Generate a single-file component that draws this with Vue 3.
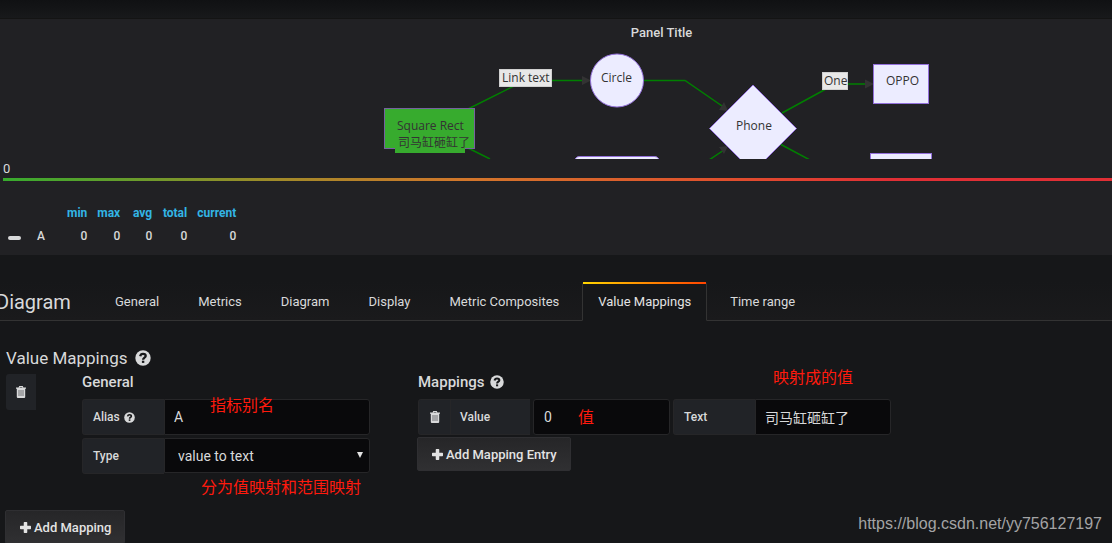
<script setup>
import { ref } from 'vue'

const tabs = ['General', 'Metrics', 'Diagram', 'Display', 'Metric Composites', 'Value Mappings', 'Time range']
const activeTab = ref('Value Mappings')
const stats = ['min', 'max', 'avg', 'total', 'current']
const series = [{ name: 'A', min: 0, max: 0, avg: 0, total: 0, current: 0 }]
const alias = ref('A')
const mappingType = ref('value to text')
const entryValue = ref('0')
const entryText = ref('司马缸砸缸了')
</script>

<template>
  <div class="page">
    <svg class="defs" aria-hidden="true">
      <symbol id="trash" viewBox="0 0 10 12">
        <path d="M3.200 0h3.600l.6 1.500H10v1.300H9.200V11q0 1-1 1H1.800q-1 0-1-1V2.800H0V1.500h2.600zM3.800 1l-.2.5h2.800L6.200 1z" fill="currentColor" fill-rule="evenodd" />
        <path d="M3 4v6M5 4v6M7 4v6" stroke="#55575a" stroke-width=".8" />
      </symbol>
      <symbol id="plus" viewBox="0 0 10 10">
        <path d="M4 0h2q.6 0 .6.6v2.800h2.800q.6 0 .6.6v2q0 .6-.6.6H6.600v2.800q0 .6-.6.6H4q-.6 0-.6-.6V6.600H.6Q0 6.600 0 6V4q0-.6.6-.6h2.800V.6Q3.400 0 4 0z" fill="currentColor" />
      </symbol>
      <symbol id="help" viewBox="0 0 16 16">
        <circle cx="8" cy="8" r="7.700" fill="currentColor" />
        <path d="M5.200 6.300C5.500 4.600 6.500 3.900 8 3.900c1.500 0 2.700.8 2.700 2.100C10.700 7.600 8.100 7.700 8.100 9.700" fill="none" stroke="#161719" stroke-width="2.300" />
        <rect x="6.900" y="10.700" width="2.400" height="2.200" fill="#161719" />
      </symbol>
    </svg>

    <div class="topbar"></div>

    <section class="panel">
      <div class="canvas">
        <h1 class="panel-title">Panel Title</h1>
        <svg class="diagram" viewBox="380 48 560 111" width="560" height="111">
          <g class="edges">
            <path d="M468 109L525 80.500H587" />
            <path d="M643 80.500H685L725 108" />
            <path d="M782 113L835 84H870" />
            <path d="M468 148L490 159" />
            <path d="M709 160L724 150" />
            <path d="M780 144L810 160" />
          </g>
          <g class="arrows">
            <path d="M582 76l9 4.500-9 4.500z" />
            <path d="M728 111l-9-1 5-8z" />
            <path d="M865 79.500l9 4.500-9 4.500z" />
            <path d="M728 146l-9 1 5 7z" />
          </g>
          <g class="nodes">
            <rect class="hot" x="384.500" y="108.500" width="90" height="40" />
            <circle cx="617" cy="80.500" r="26.500" />
            <path d="M753 85L796.500 128.500L753 172L709.500 128.500z" />
            <rect x="873.500" y="64.500" width="55" height="39" />
            <rect x="574.500" y="156.500" width="85" height="40" rx="5" />
            <rect x="870.500" y="153.500" width="61" height="40" />
          </g>
          <rect x="395" y="144" width="70" height="9" fill="#37ab2e" />
          <g class="tags">
            <rect x="499.500" y="69.500" width="52" height="17" />
            <rect x="822.500" y="72.500" width="25" height="17" />
          </g>
          <g class="captions">
            <text x="502" y="82">Link text</text>
            <text x="601" y="82">Circle</text>
            <text x="824" y="85">One</text>
            <text x="886" y="85">OPPO</text>
            <text x="736" y="130">Phone</text>
            <text x="397" y="130">Square Rect</text>
            <text x="398" y="147">司马缸砸缸了</text>
          </g>
        </svg>
      </div>

      <div class="scale">
        <span>0</span>
        <div class="scale-bar"></div>
      </div>

      <table class="legend">
        <thead>
          <tr>
            <th class="key"></th>
            <th class="name"></th>
            <th v-for="s in stats" :key="s" :class="s">{{ s }}</th>
          </tr>
        </thead>
        <tbody>
          <tr v-for="row in series" :key="row.name">
            <td class="key"><i class="dash"></i></td>
            <td class="name">{{ row.name }}</td>
            <td v-for="s in stats" :key="s">{{ row[s] }}</td>
          </tr>
        </tbody>
      </table>
    </section>

    <header class="tabs-bar">
      <h2 class="editor-title">Diagram</h2>
      <nav class="tabs">
        <button v-for="t in tabs" :key="t" type="button" class="tab" :class="{ active: t === activeTab }" @click="activeTab = t">{{ t }}</button>
      </nav>
    </header>

    <main class="editor">
      <h3 class="section-title">Value Mappings <svg class="help-lg"><use href="#help" /></svg></h3>
      <div class="mapping">
        <button type="button" class="remove" aria-label="Remove mapping"><svg class="trash"><use href="#trash" /></svg></button>

        <section class="general">
          <h4>General</h4>
          <div class="row">
            <label class="label" for="alias">Alias <svg class="help-sm"><use href="#help" /></svg></label>
            <input id="alias" v-model="alias" class="field" type="text" />
            <span class="note note-alias">指标别名</span>
          </div>
          <div class="row">
            <label class="label" for="type">Type</label>
            <div class="select-wrap">
              <select id="type" v-model="mappingType" class="field">
                <option>value to text</option>
                <option>range to text</option>
              </select>
            </div>
            <span class="note note-type">分为值映射和范围映射</span>
          </div>
        </section>

        <section class="entries">
          <h4>Mappings <svg class="help-md"><use href="#help" /></svg></h4>
          <div class="row">
            <button type="button" class="label entry-remove" aria-label="Remove entry"><svg class="trash"><use href="#trash" /></svg></button>
            <label class="label value-label" for="value">Value</label>
            <input id="value" v-model="entryValue" class="field short spaced" type="text" />
            <label class="label" for="text">Text</label>
            <input id="text" v-model="entryText" class="field short" type="text" />
            <span class="note note-value">值</span>
            <span class="note note-text">映射成的值</span>
          </div>
          <button type="button" class="btn"><svg class="plus"><use href="#plus" /></svg>Add Mapping Entry</button>
        </section>
      </div>
      <button type="button" class="btn add-mapping"><svg class="plus"><use href="#plus" /></svg>Add Mapping</button>
    </main>

    <span class="watermark">https://blog.csdn.net/yy756127197</span>
  </div>
</template>

<style>
body {
  background: #161719;
  overflow: hidden;
}
</style>

<style scoped>
.page {
  position: relative;
  height: 100vh;
  overflow: hidden;
  background: #161719;
  color: #d8d9da;
  font: 13px/18px Roboto, "Noto Sans CJK SC", sans-serif;
}
.page * {
  box-sizing: border-box;
}
h1, h2, h3, h4 {
  margin: 0;
  font-weight: 500;
}
button, input, select {
  margin: 0;
  font-family: inherit;
  color: inherit;
}
.defs {
  position: absolute;
  width: 0;
  height: 0;
}
.topbar {
  height: 19px;
  background: linear-gradient(#101113, #18191b);
  border-bottom: 1px solid #141414;
}
.panel {
  height: 236px;
  background: #212124;
}
.canvas {
  display: flex;
  flex-direction: column;
  align-items: center;
  padding: 5px 0 0 211px;
}
.panel-title {
  font-size: 13px;
  line-height: 18px;
  margin-bottom: 6px;
}
.diagram {
  display: block;
  flex: none;
  margin-right: 3px;
}
.edges path {
  fill: none;
  stroke: #008000;
  stroke-width: 1.500;
}
.arrows path {
  fill: #333;
}
.nodes > * {
  fill: #ececff;
  stroke: #9370db;
}
.nodes .hot {
  fill: #37ab2e;
  stroke: #76619f;
}
.tags rect {
  fill: #e8e8e8;
  stroke: #d0d0d0;
}
.captions {
  fill: #333;
  font: 12px "Open Sans", "Noto Sans CJK SC", sans-serif;
}
.scale {
  padding: 1px 0 0 3px;
}
.scale span {
  display: block;
}
.scale-bar {
  height: 3px;
  background: linear-gradient(90deg, #37ab2e, #a28a29 25%, #d3762b 42%, #e0502d 65%, #e02f35 80%);
}
.legend {
  margin-top: 20px;
  border-collapse: collapse;
  font-size: 12px;
  font-weight: 500;
}
.legend th, .legend td {
  height: 23px;
  padding: 0 0 0 10px;
  text-align: right;
}
.legend th {
  color: #33b5e5;
  font-weight: 700;
}
.legend .avg {
  width: 32px;
}
.legend .total {
  width: 35px;
}
.legend .current {
  width: 49px;
}
.legend .key {
  width: 21px;
  padding: 0 0 0 8px;
}
.legend .name {
  width: 36px;
  padding: 0 12px 0 0;
}
.dash {
  display: block;
  width: 13px;
  height: 4px;
  margin-top: 4px;
  border-radius: 2px;
  background: #d8d9da;
}
.tabs-bar {
  display: flex;
  height: 39px;
  margin-top: 27px;
  border-bottom: 1px solid #333;
  background: linear-gradient(#161719, #1a1a1c);
}
.editor-title {
  flex: none;
  width: 103px;
  margin-left: -4px;
  font-size: 20px;
  line-height: 40px;
  font-weight: 400;
}
.tabs {
  display: flex;
  gap: 7px;
}
.tab {
  position: relative;
  height: 39px;
  padding: 0 15px;
  border: 1px solid transparent;
  background: transparent;
  font-size: 13px;
  line-height: 37px;
}
.tab.active {
  border-color: #333 #333 transparent;
  border-radius: 3px 3px 0 0;
  background: #161719;
  color: #e3e3e3;
}
.tab.active::before {
  content: "";
  position: absolute;
  top: -1px;
  left: 0;
  right: 0;
  height: 2px;
  background: linear-gradient(90deg, #ffd500, #ff4400);
}
.editor {
  padding: 26px 5px 0;
}
.section-title {
  display: flex;
  align-items: center;
  gap: 8px;
  padding-left: 1px;
  font-size: 17px;
  line-height: 22px;
  font-weight: 400;
}
.help-lg {
  width: 16px;
  height: 16px;
}
.help-md {
  width: 14px;
  height: 14px;
}
.help-sm {
  width: 11px;
  height: 11px;
}
.mapping {
  display: flex;
  align-items: flex-start;
  padding-left: 1px;
}
.remove {
  flex: none;
  width: 30px;
  height: 36px;
  margin: 5px 46px 0 0;
  padding: 0;
  border: 0;
  border-radius: 3px 0 0 3px;
  background: #212327;
}
.trash {
  display: block;
  width: 10px;
  height: 12px;
  margin: 0 auto;
}
.general {
  width: 336px;
}
h4 {
  display: flex;
  align-items: center;
  gap: 6px;
  height: 30px;
  padding-bottom: 4px;
  font-size: 15px;
  line-height: 26px;
  font-weight: 500;
}
.row {
  position: relative;
  display: flex;
  height: 36px;
  margin-bottom: 3px;
}
.label {
  display: flex;
  align-items: center;
  gap: 4px;
  flex: none;
  width: 82px;
  padding: 0 10px;
  border: 1px solid #262628;
  border-right: 0;
  border-radius: 3px 0 0 3px;
  background: #212327;
  font-size: 12px;
  font-weight: 500;
}
.entry-remove {
  width: 32px;
}
.value-label {
  width: 80px;
  padding-left: 9px;
  border-radius: 0;
}
.field {
  width: 206px;
  height: 36px;
  padding: 0 9px;
  border: 1px solid #262628;
  border-radius: 0 3px 3px 0;
  background: #09090b;
  font-size: 14px;
  line-height: 20px;
  appearance: none;
}
.field.short {
  width: 136px;
}
.field.spaced {
  width: 137px;
  margin: 0 3px;
  padding: 0 10px;
  border-radius: 3px;
}
.select-wrap {
  position: relative;
}
.select-wrap .field {
  height: 35px;
  padding-left: 13px;
}
.select-wrap::after {
  content: "";
  position: absolute;
  top: 14px;
  right: 7px;
  border: 3px solid transparent;
  border-top: 6px solid #e3e3e3;
  border-bottom: 0;
  pointer-events: none;
}
.btn {
  display: flex;
  align-items: center;
  gap: 3px;
  height: 34px;
  padding: 0 13px 0 14px;
  border: 1px solid #2f2f32;
  border-radius: 2px;
  background: linear-gradient(#262628, #303032);
  font-size: 13px;
  font-weight: 500;
  color: #e3e3e3;
}
.entries .btn {
  margin: -1px 0 0 -1px;
}
.add-mapping {
  margin-top: 33px;
}
.plus {
  width: 11px;
  height: 11px;
}
.note {
  position: absolute;
  color: #ff1a0d;
  font: 16px/20px "Noto Sans CJK SC", sans-serif;
  white-space: nowrap;
  pointer-events: none;
}
.note-alias {
  top: -5px;
  left: 128px;
}
.note-type {
  top: 38px;
  left: 119px;
}
.note-value {
  top: 7px;
  left: 160px;
}
.note-text {
  top: -33px;
  left: 355px;
}
.watermark {
  position: absolute;
  right: 10px;
  bottom: 9px;
  color: #a4a4a5;
  font: 16px/20px "Liberation Sans", Arial, sans-serif;
}
</style>
